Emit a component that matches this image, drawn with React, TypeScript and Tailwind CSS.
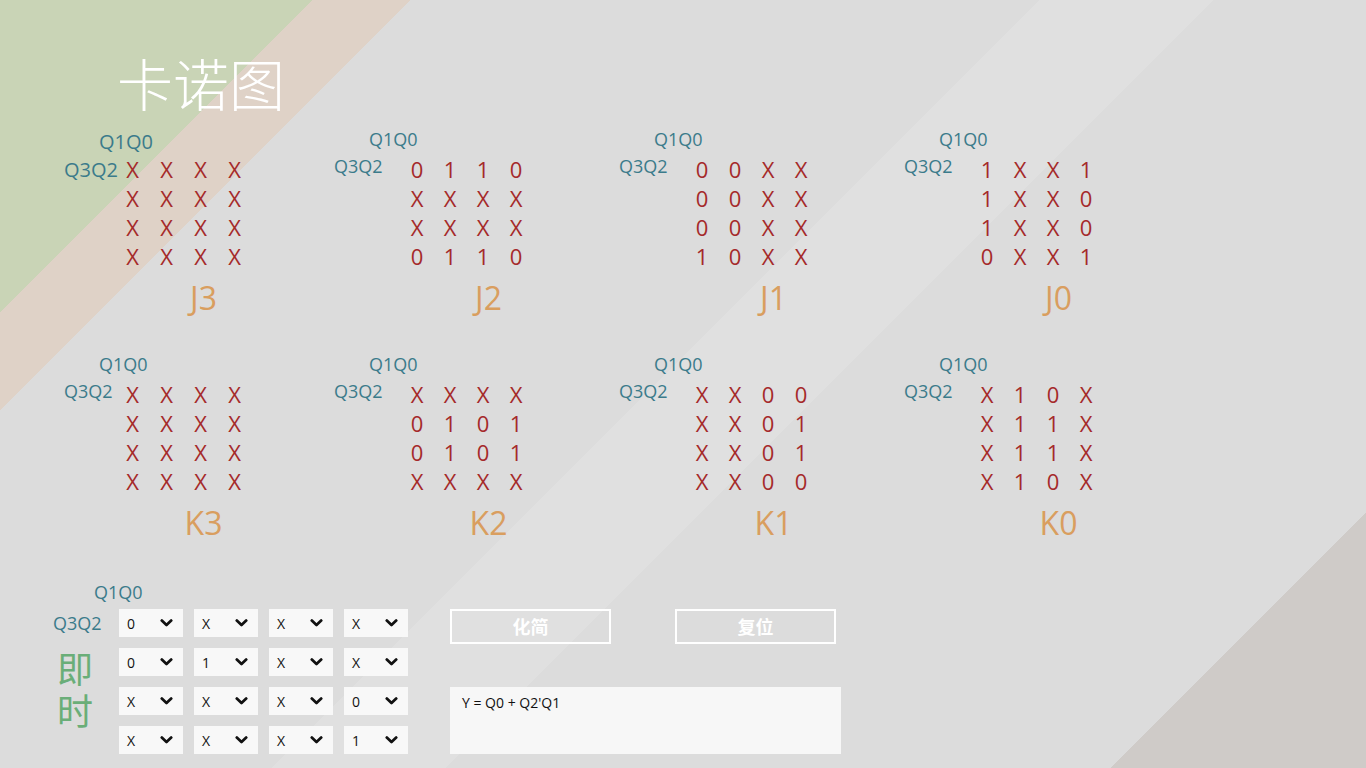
import React from "react";

type Cell = "0" | "1" | "X";

const maps: { name: string; cells: Cell[][] }[][] = [
  [
    { name: "J3", cells: [["X", "X", "X", "X"], ["X", "X", "X", "X"], ["X", "X", "X", "X"], ["X", "X", "X", "X"]] },
    { name: "J2", cells: [["0", "1", "1", "0"], ["X", "X", "X", "X"], ["X", "X", "X", "X"], ["0", "1", "1", "0"]] },
    { name: "J1", cells: [["0", "0", "X", "X"], ["0", "0", "X", "X"], ["0", "0", "X", "X"], ["1", "0", "X", "X"]] },
    { name: "J0", cells: [["1", "X", "X", "1"], ["1", "X", "X", "0"], ["1", "X", "X", "0"], ["0", "X", "X", "1"]] },
  ],
  [
    { name: "K3", cells: [["X", "X", "X", "X"], ["X", "X", "X", "X"], ["X", "X", "X", "X"], ["X", "X", "X", "X"]] },
    { name: "K2", cells: [["X", "X", "X", "X"], ["0", "1", "0", "1"], ["0", "1", "0", "1"], ["X", "X", "X", "X"]] },
    { name: "K1", cells: [["X", "X", "0", "0"], ["X", "X", "0", "1"], ["X", "X", "0", "1"], ["X", "X", "0", "0"]] },
    { name: "K0", cells: [["X", "1", "0", "X"], ["X", "1", "1", "X"], ["X", "1", "1", "X"], ["X", "1", "0", "X"]] },
  ],
];

const inputs: Cell[][] = [
  ["0", "X", "X", "X"],
  ["0", "1", "X", "X"],
  ["X", "X", "X", "0"],
  ["X", "X", "X", "1"],
];

function KMap({ name, cells, first, big }: { name: string; cells: Cell[][]; first?: boolean; big?: boolean }) {
  return (
    <div className="w-[285px] shrink-0">
      <div
        className={`h-[30px] whitespace-nowrap leading-[28px] text-[#3b7b8b] ${big ? "pt-[3px] text-[20px]" : "text-[18px]"} ${first ? "pl-[50px]" : "pl-[35px]"}`}
      >
        Q1Q0
      </div>
      <div className="flex">
        <div
          className={`w-[66.5px] shrink-0 whitespace-nowrap text-[#3b7b8b] ${big ? "text-[20px] leading-[29px]" : "text-[18px] leading-[23px]"} ${first ? "pl-[15px]" : ""}`}
        >
          Q3Q2
        </div>
        <div className="flex flex-col">
          {cells.map((row, r) => (
            <div key={r} className="flex h-[29px]">
              {row.map((c, i) => (
                <div
                  key={i}
                  className={`text-center text-[22px] leading-[29px] text-[#a52a2a] ${first ? "w-[34px]" : "w-[33px]"}`}
                >
                  {c}
                </div>
              ))}
            </div>
          ))}
        </div>
      </div>
      <div className="ml-[66.5px] mt-[7px] w-[132px] pl-[44px] text-center text-[32px] leading-[40px] text-[#d99e5f]">
        {name}
      </div>
    </div>
  );
}

function Chevron() {
  return (
    <svg width="13" height="8" viewBox="0 0 13 8" fill="none">
      <path d="M1.8 1.6 L6.5 6 L11.2 1.6" stroke="#111" strokeWidth="2.8" strokeLinecap="round" strokeLinejoin="round" />
    </svg>
  );
}

export default function App() {
  return (
    <div className="h-[768px] w-[1366px] overflow-hidden bg-[linear-gradient(135deg,#c9d4b6_221px,#dfd2c7_221px,#dfd2c7_290px,#dcdcdc_290px,#dcdcdc_735px,#e0e0e0_735px,#e0e0e0_858px,#dcdcdc_858px,#dcdcdc_1328px,#cfcbc8_1328px)] font-['Open_Sans','Noto_Sans_CJK_SC',sans-serif]">
      <h1 className="pl-[117px] pt-[54px] font-['Noto_Sans_CJK_SC',sans-serif] text-[56px] font-light leading-none text-white">
        卡诺图
      </h1>

      <div className="mt-[15px] flex flex-col gap-[32px] pl-[49px]">
        {maps.map((row, r) => (
          <div key={r} className="flex">
            {row.map((m, i) => (
              <KMap key={m.name} name={m.name} cells={m.cells} first={i === 0} big={r === 0 && i === 0} />
            ))}
          </div>
        ))}
      </div>

      <div className="mt-[37px] pl-[53px]">
        <div className="h-[29px] pl-[41px] text-[18px] leading-[24px] text-[#3b7b8b]">Q1Q0</div>
        <div className="flex">
          <div className="w-[66px] shrink-0">
            <div className="whitespace-nowrap text-[18px] leading-[28px] text-[#3b7b8b]">Q3Q2</div>
            <div className="mt-[14px] flex w-[44px] justify-center">
              <span className="font-['Noto_Sans_CJK_SC',sans-serif] text-[36px] leading-[44px] tracking-[6px] text-[#6aae78] [writing-mode:vertical-rl]">
                即时
              </span>
            </div>
          </div>
          <div className="grid grid-cols-[repeat(4,64px)] gap-[11px]">
            {inputs.flat().map((v, i) => (
              <div key={i} className="flex h-[28px] items-center justify-between bg-[#f8f8f8] pl-[8px] pr-[10px] text-[14px] text-[#111]">
                <span>{v}</span>
                <Chevron />
              </div>
            ))}
          </div>
          <div className="ml-[42px] flex flex-col">
            <div className="flex gap-[64px]">
              <button className="h-[35px] w-[161px] border-2 border-white font-['Noto_Sans_CJK_SC',sans-serif] text-[18px] font-bold text-white">
                化简
              </button>
              <button className="h-[35px] w-[161px] border-2 border-white font-['Noto_Sans_CJK_SC',sans-serif] text-[18px] font-bold text-white">
                复位
              </button>
            </div>
            <div className="mt-[43px] h-[67px] w-[391px] bg-[#f7f7f7] pl-[12px] pt-[6px] text-[14px] leading-[20px] text-[#111]">
              Y = Q0 + Q2'Q1
            </div>
          </div>
        </div>
      </div>
    </div>
  );
}
